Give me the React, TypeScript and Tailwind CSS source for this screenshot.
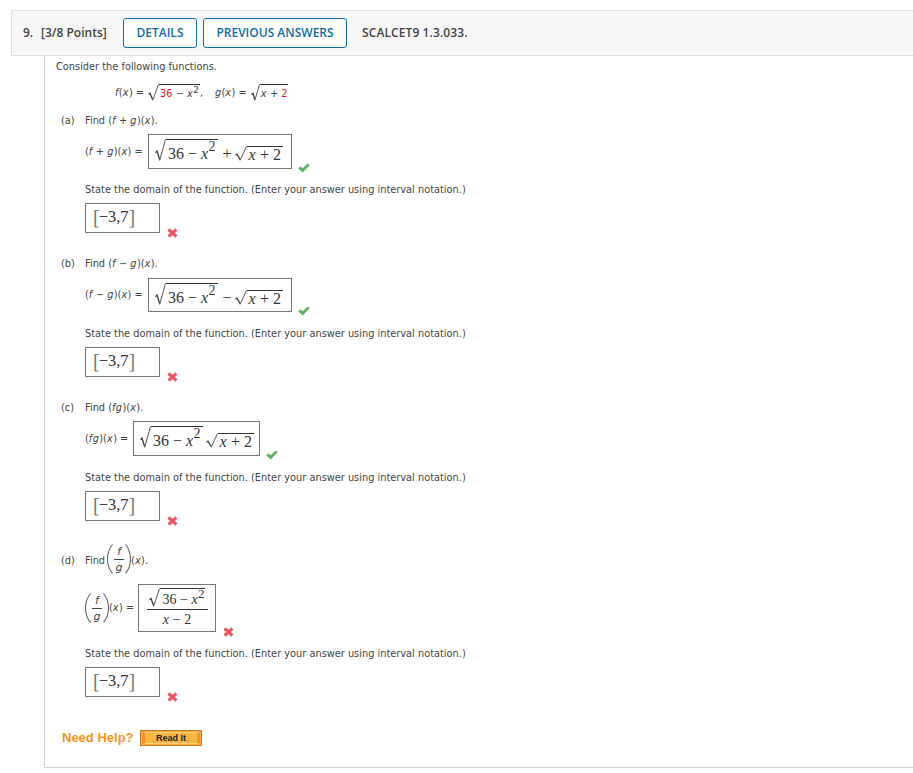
import React from "react";

const body = "[font-family:'DejaVu_Sans',sans-serif] text-[9.8px] leading-[14px] text-[#444]";
const serif = "font-['Liberation_Serif',serif] text-[16px] leading-[20px] text-[#333]";

function Radical({ w = 12, h = 20 }: { w?: number; h?: number }) {
  const bx = w * 0.42;
  return (
    <svg width={w} height={h} viewBox={`0 0 ${w} ${h}`} className="block shrink-0" fill="none">
      <path d={`M0.5 ${h * 0.62} L2 ${h * 0.55} L${bx} ${h - 1.5}`} stroke="#444" strokeWidth="1.4" />
      <path d={`M${bx} ${h - 0.5} L${w - 0.5} 0.5`} stroke="#444" strokeWidth="0.9" />
    </svg>
  );
}

function Sqrt({ children, w, h, className = "" }: { children: React.ReactNode; w?: number; h?: number; className?: string }) {
  return (
    <span className="inline-flex items-stretch">
      <Radical w={w} h={h} />
      <span className={`border-t border-[#333] whitespace-nowrap ${className}`}>{children}</span>
    </span>
  );
}

function I({ children }: { children: React.ReactNode }) {
  return <i className="italic tracking-[0.4px]">{children}</i>;
}

function Root36() {
  return (
    <Sqrt w={11} h={22} className="pl-[2px] pr-[2px] leading-[20px] pt-[4px]">
      36 − <I>x</I>
      <sup className="text-[14px] leading-none relative -top-[8px] align-baseline">2</sup>
    </Sqrt>
  );
}

function RootX() {
  return (
    <Sqrt w={12} h={15} className="leading-[15px] px-[2px]">
      <I>x</I> + 2
    </Sqrt>
  );
}

function Check() {
  return (
    <svg width="12" height="10" viewBox="0 0 12 10" className="block shrink-0 ml-[6px] -mb-1">
      <path d="M0.3 5.4 L2.4 3.3 L4.6 5.2 L9.7 0.4 L11.8 2 L4.7 9.6 Z" fill="#5cb062" />
    </svg>
  );
}

function Cross({ mb = "-mb-[5px]" }: { mb?: string }) {
  return (
    <svg width="11" height="10" viewBox="0 0 11 10" className={`block shrink-0 ml-[7px] ${mb}`}>
      <path d="M1.5 1.5 L9.5 8.5 M9.5 1.5 L1.5 8.5" stroke="#ee5560" strokeWidth="3" />
    </svg>
  );
}

function AnswerBox({ className, children }: { className: string; children: React.ReactNode }) {
  return (
    <div className={`border border-[#777] bg-white flex items-center ${serif} ${className}`}>{children}</div>
  );
}

function Domain({ stateMt = "mt-[15px]" }: { stateMt?: string }) {
  return (
    <>
      <p className={`${stateMt} pl-[40px] ${body} whitespace-nowrap`}>
        State the domain of the function. (Enter your answer using interval notation.)
      </p>
      <div className="mt-[6px] ml-[40px] flex items-end">
        <AnswerBox className="w-[75px] h-[30px] pl-[7px] pb-[2px]">
          <span className="text-[20px] font-light text-[#777] -mr-px">[</span>
          <span className="text-[16.5px]">−3,7</span>
          <span className="text-[20px] font-light text-[#777]">]</span>
        </AnswerBox>
        <Cross />
      </div>
    </>
  );
}

function PartHead({ letter, children, className }: { letter: string; children: React.ReactNode; className: string }) {
  return (
    <div className={`flex items-center pl-[16px] ${body} ${className}`}>
      <span className="w-[24px]">({letter})</span>
      {children}
    </div>
  );
}

function Paren({ flip }: { flip?: boolean }) {
  return (
    <svg width="6" height="30" viewBox="0 0 6 30" className={`block shrink-0 ${flip ? "-scale-x-100" : ""}`} fill="none">
      <path d="M5.5 0.5 C1 6 0.5 10 0.5 15 C0.5 20 1 24 5.5 29.5" stroke="#666" strokeWidth="1.1" />
    </svg>
  );
}

function FracFG() {
  return (
    <span className="inline-flex items-center">
      <Paren />
      <span className="inline-flex flex-col items-center w-[10px] mx-px text-center text-[11px] leading-[15px]">
        <i className="italic">f</i>
        <span className="w-full border-t border-[#444]" />
        <i className="italic">g</i>
      </span>
      <Paren flip />
    </span>
  );
}

export default function App() {
  return (
    <div className="w-[913px] h-[773px] bg-white overflow-hidden pt-[10px]">
      <header className="ml-[11px] h-[46px] bg-[#f7f7f7] border border-r-0 border-[#e0e0e0] flex items-center pl-[11px] font-['Open_Sans',sans-serif] text-[12px] text-[#444] font-semibold">
        <span className="w-[18px]">9.</span>
        <span className="w-[82px]">[3/8 Points]</span>
        <button className="w-[74px] h-[30px] border border-[#0f6ea5] rounded-[3px] text-[#0f6ea5] bg-white">DETAILS</button>
        <button className="ml-[6px] w-[144px] h-[30px] border border-[#0f6ea5] rounded-[3px] text-[#0f6ea5] bg-white">PREVIOUS ANSWERS</button>
        <span className="ml-[15px] tracking-[0.1px]">SCALCET9 1.3.033.</span>
      </header>

      <main className="ml-[44px] h-[712px] border-l border-b border-[#cfcfcf] pt-[4px]">
        <p className={`pl-[11px] ${body}`}>Consider the following functions.</p>

        <div className={`mt-[9px] pl-[70px] h-[20px] flex items-center whitespace-nowrap ${body}`}>
          <span><I>f</I>(<I>x</I>) = </span>
          <span className="ml-[4px] inline-flex">
            <Sqrt w={11} h={17} className="leading-[17px] pl-[1px] pr-px">
              <span className="text-[#e8101a]">36</span> − <I>x</I>
              <sup className="text-[9px] leading-none align-baseline relative -top-[4px]">2</sup>
            </Sqrt>
          </span>
          <span className="w-[15px]">,</span>
          <span><I>g</I>(<I>x</I>) = </span>
          <span className="ml-[4px] inline-flex">
            <Sqrt w={9} h={17} className="leading-[17px] pl-px">
              <I>x</I> + <span className="text-[#e8101a]">2</span>
            </Sqrt>
          </span>
        </div>

        <PartHead letter="a" className="mt-[11px]">
          <span>Find (<I>f</I> + <I>g</I>)(<I>x</I>).</span>
        </PartHead>
        <div className={`mt-[6px] pl-[40px] flex items-end ${body}`}>
          <div className="flex items-center">
            <span className="w-[63px] whitespace-nowrap">(<I>f</I> + <I>g</I>)(<I>x</I>) =</span>
            <AnswerBox className="w-[144px] h-[35px] pl-[6px] gap-[5px]">
              <Root36 />
              <span className="inline-flex items-center gap-[3px] mt-[5px]">+<RootX /></span>
            </AnswerBox>
          </div>
          <Check />
        </div>
        <Domain stateMt="mt-[14px]" />

        <PartHead letter="b" className="mt-[24px]">
          <span>Find (<I>f</I> − <I>g</I>)(<I>x</I>).</span>
        </PartHead>
        <div className={`mt-[7px] pl-[40px] flex items-end ${body}`}>
          <div className="flex items-center">
            <span className="w-[63px] whitespace-nowrap">(<I>f</I> − <I>g</I>)(<I>x</I>) =</span>
            <AnswerBox className="w-[144px] h-[34px] pl-[6px] gap-[5px]">
              <Root36 />
              <span className="inline-flex items-center gap-[3px] mt-[5px]">−<RootX /></span>
            </AnswerBox>
          </div>
          <Check />
        </div>
        <Domain />

        <PartHead letter="c" className="mt-[24px]">
          <span>Find (<I>fg</I>)(<I>x</I>).</span>
        </PartHead>
        <div className={`mt-[6px] pl-[40px] flex items-end ${body}`}>
          <div className="flex items-center">
            <span className="w-[48px] whitespace-nowrap">(<I>fg</I>)(<I>x</I>) =</span>
            <AnswerBox className="w-[127px] h-[35px] pl-[6px] gap-[3px]">
              <Root36 />
              <span className="inline-flex items-center mt-[5px]"><RootX /></span>
            </AnswerBox>
          </div>
          <Check />
        </div>
        <Domain />

        <PartHead letter="d" className="mt-[25px] h-[30px]">
          <span className="inline-flex items-center whitespace-nowrap">
            Find<span className="ml-[2px]"><FracFG /></span>(<I>x</I>).
          </span>
        </PartHead>
        <div className={`mt-[8px] pl-[40px] flex items-end ${body}`}>
          <div className="flex items-center">
            <span className="w-[53px] inline-flex items-center whitespace-nowrap"><FracFG />(<I>x</I>) =</span>
            <AnswerBox className="w-[78px] h-[48px] justify-center">
              <span className="inline-flex flex-col items-center w-[61px] text-[14px]">
                <Sqrt w={11} h={19} className="leading-[16px] pt-[3px] pl-[2px]">
                  36 − <I>x</I>
                  <sup className="text-[13px] leading-none align-baseline relative -top-[6px]">2</sup>
                </Sqrt>
                <span className="w-full border-t border-[#333] mt-[1px]" />
                <span className="leading-[19px]"><I>x</I> − 2</span>
              </span>
            </AnswerBox>
          </div>
          <Cross />
        </div>
        <Domain />

        <div className="mt-[31px] pl-[17px] h-[20px] flex items-center">
          <span className="w-[78px] font-['Liberation_Sans',sans-serif] font-bold text-[13px] text-[#f7931e] whitespace-nowrap">Need Help?</span>
          <button className="w-[62px] h-[16px] border border-[#c87a24] bg-[#f9a83c] p-px">
            <span className="flex items-center justify-center h-full border-x-[3px] border-y border-x-[#f0932b] border-y-[#ffd27a] bg-[#fbb443] font-['Liberation_Sans',sans-serif] font-bold text-[9px] leading-none text-[#222]">Read It</span>
          </button>
        </div>
      </main>
    </div>
  );
}
